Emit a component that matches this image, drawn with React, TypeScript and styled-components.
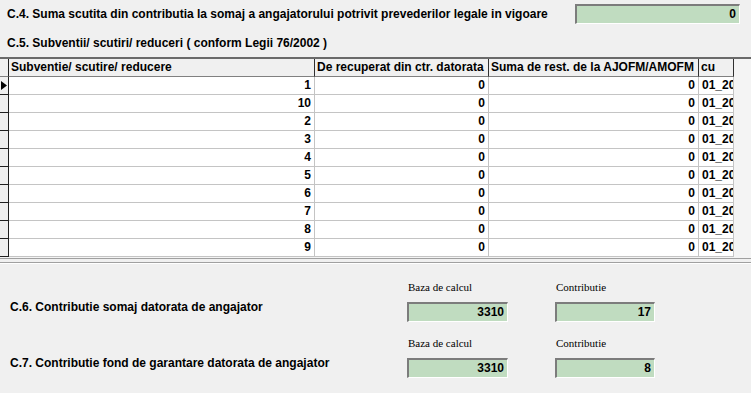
import React from "react";
import styled, { createGlobalStyle } from "styled-components";

const Global = createGlobalStyle`
  html, body { margin: 0; padding: 0; background: #f0f0f0; overflow: hidden; }
  body { font-family: "Liberation Sans", Arial, sans-serif; }
`;

const Page = styled.div`
  width: 751px;
  height: 393px;
  background: #f0f0f0;
  display: flex;
  flex-direction: column;
`;

const TopRow = styled.div`
  height: 28px;
  box-sizing: border-box;
  padding: 4px 11px 0 7px;
  display: flex;
  justify-content: space-between;
  align-items: flex-start;
`;

const Caption = styled.div`
  font-weight: bold;
  font-size: 12px;
  color: #000;
  line-height: 20px;
  white-space: nowrap;
`;

const SectionTitle = styled.div`
  height: 29px;
  box-sizing: border-box;
  padding: 5px 0 0 7px;
  font-weight: bold;
  font-size: 12px;
  line-height: 20px;
  white-space: nowrap;
`;

const Field = styled.div<{ $w: number }>`
  width: ${(p) => p.$w}px;
  height: 20px;
  box-sizing: border-box;
  background: #c0dcc0;
  border-top: 2px solid #7c7c7c;
  border-left: 2px solid #7c7c7c;
  border-right: 1px solid #ffffff;
  border-bottom: 1px solid #ffffff;
  text-align: right;
  padding-right: 3px;
  font-weight: bold;
  font-size: 12px;
  line-height: 17px;
  color: #000;
`;

const GridWrap = styled.div`
  border-top: 2px solid #6a6a6a;
  height: 202px;
  box-sizing: border-box;
  background: #f4f4f4;
  border-bottom: 1px solid #a0a0a0;
`;

const Grid = styled.div`
  display: grid;
  grid-template-columns: 9px 306px 174px 210px 35px;
  grid-auto-rows: 18px;
`;

const Indicator = styled.div<{ $head?: boolean }>`
  box-sizing: border-box;
  background: #f0f0f0;
  border-right: 1px solid #202020;
  border-bottom: 1px solid ${(p) => (p.$head ? "#808080" : "#202020")};
  display: flex;
  align-items: center;
  justify-content: flex-start;
`;

const HeadCell = styled.div`
  box-sizing: border-box;
  background: #f0f0f0;
  border-right: 1px solid #303030;
  border-bottom: 1px solid #808080;
  font-weight: bold;
  font-size: 12px;
  line-height: 17px;
  padding-left: 2px;
  white-space: nowrap;
  overflow: hidden;
`;

const Cell = styled.div<{ $left?: boolean }>`
  box-sizing: border-box;
  background: #ffffff;
  border-right: 1px solid #c4c4c4;
  border-bottom: 1px solid #c4c4c4;
  font-weight: bold;
  font-size: 12px;
  line-height: 17px;
  text-align: ${(p) => (p.$left ? "left" : "right")};
  padding: ${(p) => (p.$left ? "0 0 0 3px" : "0 3px 0 0")};
  white-space: nowrap;
  overflow: hidden;
`;

const Separator = styled.div`
  margin-top: 3px;
  border-top: 1px solid #a0a0a0;
  border-bottom: 1px solid #ffffff;
`;

const Bottom = styled.div`
  padding-top: 17px;
  display: flex;
  flex-direction: column;
  gap: 15px;
`;

const CalcRow = styled.div`
  display: flex;
  align-items: flex-end;
`;

const CalcLabel = styled.div`
  width: 407px;
  box-sizing: border-box;
  padding: 0 0 5px 10px;
  font-weight: bold;
  font-size: 12px;
  line-height: 20px;
  white-space: nowrap;
`;

const FieldGroup = styled.div`
  display: flex;
  gap: 47px;
`;

const FieldCol = styled.div`
  display: flex;
  flex-direction: column;
`;

const SmallLabel = styled.div`
  font-family: "Liberation Serif", "Times New Roman", serif;
  font-size: 11px;
  line-height: 13px;
  height: 13px;
  margin: 0 0 8px 1px;
  color: #000;
  white-space: nowrap;
`;

const Arrow = () => (
  <svg width="6" height="9" viewBox="0 0 6 9" style={{ display: "block", marginLeft: 1 }}>
    <path d="M0 0 L6 4.5 L0 9 Z" fill="#000" />
  </svg>
);

const rows = ["1", "10", "2", "3", "4", "5", "6", "7", "8", "9"];

export default function App() {
  return (
    <Page>
      <Global />
      <TopRow>
        <Caption>C.4. Suma scutita din contributia la somaj a angajatorului potrivit prevederilor legale in vigoare</Caption>
        <Field $w={165}>0</Field>
      </TopRow>
      <SectionTitle>C.5. Subventii/ scutiri/ reduceri ( conform Legii 76/2002 )</SectionTitle>
      <GridWrap>
        <Grid>
          <Indicator $head />
          <HeadCell>Subventie/ scutire/ reducere</HeadCell>
          <HeadCell>De recuperat din ctr. datorata</HeadCell>
          <HeadCell>Suma de rest. de la AJOFM/AMOFM</HeadCell>
          <HeadCell>cu</HeadCell>
          {rows.map((r, i) => (
            <React.Fragment key={r}>
              <Indicator>{i === 0 ? <Arrow /> : null}</Indicator>
              <Cell>{r}</Cell>
              <Cell>0</Cell>
              <Cell>0</Cell>
              <Cell $left>01_2018</Cell>
            </React.Fragment>
          ))}
        </Grid>
      </GridWrap>
      <Separator />
      <Bottom>
        <CalcRow>
          <CalcLabel>C.6. Contributie somaj datorata de angajator</CalcLabel>
          <FieldGroup>
            <FieldCol>
              <SmallLabel>Baza de calcul</SmallLabel>
              <Field $w={101}>3310</Field>
            </FieldCol>
            <FieldCol>
              <SmallLabel>Contributie</SmallLabel>
              <Field $w={100}>17</Field>
            </FieldCol>
          </FieldGroup>
        </CalcRow>
        <CalcRow>
          <CalcLabel>C.7. Contributie fond de garantare datorata de angajator</CalcLabel>
          <FieldGroup>
            <FieldCol>
              <SmallLabel>Baza de calcul</SmallLabel>
              <Field $w={101}>3310</Field>
            </FieldCol>
            <FieldCol>
              <SmallLabel>Contributie</SmallLabel>
              <Field $w={100}>8</Field>
            </FieldCol>
          </FieldGroup>
        </CalcRow>
      </Bottom>
    </Page>
  );
}
